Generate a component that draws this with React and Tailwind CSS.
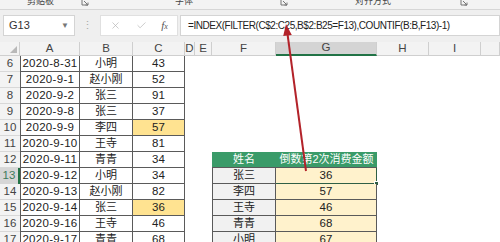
import { X, Check } from "lucide-react";

const font = { fontFamily: '"Liberation Sans", "Noto Sans CJK SC", sans-serif' };

const cols = [
  { k: "A", w: "w-[60px]" },
  { k: "B", w: "w-[53px]" },
  { k: "C", w: "w-[52px]" },
  { k: "D", w: "w-[10px]" },
  { k: "E", w: "w-[17px]" },
  { k: "F", w: "w-[64px]" },
  { k: "G", w: "w-[101px]" },
  { k: "H", w: "w-[52px]" },
  { k: "I", w: "w-[52px]" },
  { k: "", w: "w-[19px]" },
];

const data = [
  [6, "2020-8-31", "小明", "43"],
  [7, "2020-9-1", "赵小刚", "52"],
  [8, "2020-9-2", "张三", "91"],
  [9, "2020-9-8", "张三", "37"],
  [10, "2020-9-9", "李四", "57"],
  [11, "2020-9-10", "王寺", "81"],
  [12, "2020-9-11", "青青", "34"],
  [13, "2020-9-12", "小明", "34"],
  [14, "2020-9-13", "赵小刚", "82"],
  [15, "2020-9-14", "张三", "36"],
  [16, "2020-9-16", "王寺", "46"],
  [17, "2020-9-17", "青青", "68"],
];

const side = {
  13: ["张三", "36"],
  14: ["李四", "57"],
  15: ["王寺", "46"],
  16: ["青青", "68"],
  17: ["小明", "67"],
};

function Launcher() {
  return (
    <svg width="8" height="8" viewBox="0 0 8 8" className="text-[#777]">
      <path d="M1 1v6h6" fill="none" stroke="currentColor" strokeWidth="1" />
      <path d="M3 3l4 4M7 4.5V7H4.5" fill="none" stroke="currentColor" strokeWidth="1" />
    </svg>
  );
}

function Ribbon() {
  return (
    <div className="h-[10px] bg-[#f3f3f3] border-b border-[#d6d6d6] flex items-start overflow-hidden text-[9px] leading-[12px] text-[#444]">
      <div className="w-[27px] shrink-0" />
      <span className="-mt-[5px] shrink-0">剪贴板</span>
      <div className="w-[27px] shrink-0" />
      <div className="-mt-[2px] shrink-0"><Launcher /></div>
      <div className="w-[86px] shrink-0" />
      <span className="-mt-[5px] shrink-0">字体</span>
      <div className="w-[87px] shrink-0" />
      <div className="-mt-[2px] shrink-0"><Launcher /></div>
      <div className="w-[67px] shrink-0" />
      <span className="-mt-[5px] shrink-0">对齐方式</span>
      <div className="w-[69px] shrink-0" />
      <div className="-mt-[2px] shrink-0"><Launcher /></div>
    </div>
  );
}

function FormulaBar() {
  return (
    <div className="h-[32px] bg-[#efefef] flex items-start pt-[5px]">
      <div className="ml-[3px] w-[72px] h-[21px] bg-white border border-[#d4d4d4] flex items-center justify-between px-[5px] text-[11px] text-[#333]">
        <span>G13</span>
        <span className="text-[8px] text-[#777]">▼</span>
      </div>
      <div className="w-[25px] h-[21px] flex items-center justify-center text-[11px] text-[#aaa]">⋮</div>
      <div className="w-[78px] h-[21px] bg-white border border-[#e0e0e0] flex items-center justify-around px-[2px]">
        <X size={11} strokeWidth={1.5} className="text-[#b5b5b5]" />
        <Check size={11} strokeWidth={1.5} className="text-[#b5b5b5]" />
        <span className="italic text-[11px] text-[#555]" style={{ fontFamily: '"Liberation Serif", serif' }}>
          f<span className="text-[8px]">x</span>
        </span>
      </div>
      <div className="ml-[2px] flex-1 h-[21px] bg-white border border-[#d4d4d4] flex items-center pl-[7px] text-[10px] tracking-[-0.45px] text-[#222] whitespace-nowrap">
        =INDEX(FILTER(C$2:C25,B$2:B25=F13),COUNTIF(B:B,F13)-1)
      </div>
    </div>
  );
}

function ColumnHeader() {
  return (
    <div className="flex h-[14px] bg-[#f3f3f3] text-[11.5px] text-[#444]">
      <div className="w-[20px] shrink-0 border-r border-b border-[#cfcfcf] flex items-end justify-end p-[2px]">
        <svg width="7" height="7" viewBox="0 0 7 7">
          <path d="M7 0V7H0Z" fill="#b8b8b8" />
        </svg>
      </div>
      {cols.map((c) => (
        <div
          key={c.k + c.w}
          className={`${c.w} shrink-0 flex items-center justify-center leading-none border-r ${
            c.k === "G"
              ? "bg-[#d4d4d4] border-b-2 border-b-[#217346] border-r-[#cfcfcf]"
              : "border-b border-[#cfcfcf]"
          }`}
        >
          {c.k}
        </div>
      ))}
    </div>
  );
}

function Row({ n, a, b, c }) {
  const yellow = n === 10 || n === 15;
  const s = side[n];
  return (
    <div className="flex h-[16px] text-[11.5px] text-[#222] leading-none">
      <div
        className={`w-[20px] shrink-0 flex items-center justify-center ${
          n === 13
            ? "bg-[#d6d6d6] text-[#3d7a5a] border-r-2 border-[#217346]"
            : "bg-[#f3f3f3] text-[#444] border-b border-[#d8d8d8]"
        }`}
      >
        {n}
      </div>
      <div className="w-[60px] shrink-0 flex items-center justify-center border-l border-r border-b border-[#5a5a5a] tracking-[0.3px]">
        {a}
      </div>
      <div className="w-[53px] shrink-0 flex items-center justify-center border-r border-b border-[#5a5a5a] text-[11px]">
        {b}
      </div>
      <div
        className={`w-[52px] shrink-0 flex items-center justify-center border-r border-b border-[#5a5a5a] ${
          yellow ? "bg-[#ffe391]" : ""
        }`}
      >
        {c}
      </div>
      <div className="w-[10px] shrink-0" />
      <div className="w-[17px] shrink-0" />
      {n === 12 ? (
        <>
          <div className="w-[64px] shrink-0 bg-[#3a9b69] text-white text-[11px] flex items-center justify-center border-b border-[#5a5a5a]">
            姓名
          </div>
          <div className="w-[101px] shrink-0 bg-[#3a9b69] text-white text-[11px] flex items-center justify-center border-b border-[#5a5a5a]">
            倒数第2次消费金额
          </div>
        </>
      ) : s ? (
        <>
          <div className="w-[64px] shrink-0 bg-[#f1f1f1] text-[11px] flex items-center justify-center border-l border-r border-b border-[#5a5a5a]">
            {s[0]}
          </div>
          <div
            className={`relative w-[101px] shrink-0 bg-[#fff2cc] flex items-center justify-center border-r border-b ${
              n === 13 ? "border-[#2f5f45]" : "border-[#5a5a5a]"
            }`}
          >
            {s[1]}
            {n === 13 && (
              <div className="absolute right-[-3px] bottom-[-3px] w-[5px] h-[5px] bg-[#2f5f45] border border-white" />
            )}
          </div>
        </>
      ) : (
        <>
          <div className="w-[64px] shrink-0" />
          <div className="w-[101px] shrink-0" />
        </>
      )}
    </div>
  );
}

export default function App() {
  return (
    <div className="relative w-[500px] h-[242px] overflow-hidden bg-white" style={font}>
      <Ribbon />
      <FormulaBar />
      <ColumnHeader />
      {data.map(([n, a, b, c]) => (
        <Row key={n} n={n} a={a} b={b} c={c} />
      ))}

      {/* red arrow overlay */}
      <svg className="absolute left-0 top-0 pointer-events-none" width="500" height="242" viewBox="0 0 500 242">
        <line x1="306" y1="171" x2="287.5" y2="34" stroke="#b3232a" strokeWidth="2" />
        <polygon points="286,24 291.8,35 283.2,36" fill="#b3232a" />
      </svg>
    </div>
  );
}
